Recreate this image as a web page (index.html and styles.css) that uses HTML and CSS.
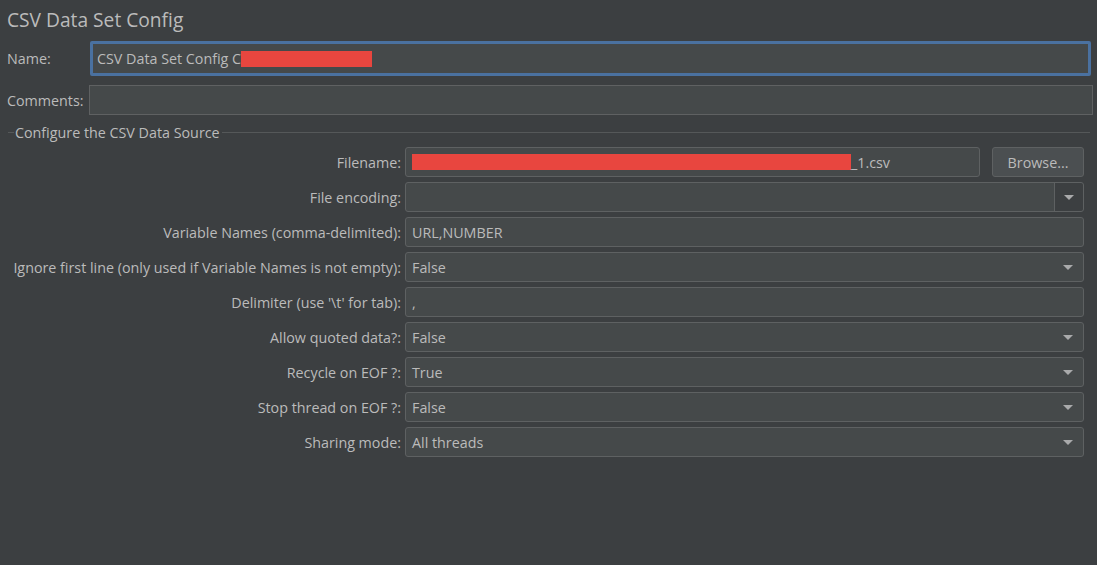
FILE: index.html
```html
<!DOCTYPE html>
<html>
<head>
<meta charset="utf-8">
<link rel="stylesheet" href="styles.css">
</head>
<body>
<div class="panel">
  <div class="title">CSV Data Set Config</div>
  <div class="top-row name-row">
    <label class="top-label">Name:</label>
    <div class="field focused"><span>CSV Data Set Config C</span><span class="redact name-redact"></span></div>
  </div>
  <div class="top-row comments-row">
    <label class="top-label">Comments:</label>
    <div class="field plain"></div>
  </div>
  <div class="group">
    <div class="group-title"><span class="tick"></span><span class="gt-text">Configure the CSV Data Source</span><span class="rule"></span></div>
    <div class="form">
      <label>Filename:</label>
      <div class="file-line">
        <div class="field box"><span class="redact file-redact"></span><span>_1.csv</span></div>
        <button class="browse">Browse...</button>
      </div>

      <label>File encoding:</label>
      <div class="field box combo editable"><span class="val"></span><span class="arrow-btn"><span class="tri"></span></span></div>

      <label>Variable Names (comma-delimited):</label>
      <div class="field box"><span>URL,NUMBER</span></div>

      <label>Ignore first line (only used if Variable Names is not empty):</label>
      <div class="field box combo"><span class="val">False</span><span class="arrow"><span class="tri"></span></span></div>

      <label>Delimiter (use '\t' for tab):</label>
      <div class="field box"><span>,</span></div>

      <label>Allow quoted data?:</label>
      <div class="field box combo"><span class="val">False</span><span class="arrow"><span class="tri"></span></span></div>

      <label>Recycle on EOF ?:</label>
      <div class="field box combo"><span class="val">True</span><span class="arrow"><span class="tri"></span></span></div>

      <label>Stop thread on EOF ?:</label>
      <div class="field box combo"><span class="val">False</span><span class="arrow"><span class="tri"></span></span></div>

      <label>Sharing mode:</label>
      <div class="field box combo"><span class="val">All threads</span><span class="arrow"><span class="tri"></span></span></div>
    </div>
  </div>
</div>
</body>
</html>
```

FILE: styles.css
```css
* { box-sizing: border-box; }
html, body {
  margin: 0;
  padding: 0;
  background: #3c3f41;
  width: 1097px;
  height: 565px;
  overflow: hidden;
}
body {
  font-family: "Open Sans", "Noto Sans", sans-serif;
  font-size: 14.3px;
  color: #bbbbbb;
}
.title {
  font-size: 19.2px;
  line-height: 24px;
  padding: 8px 0 0 7px;
  height: 40px;
}
.top-row {
  display: flex;
  align-items: center;
}
.top-label {
  padding-left: 7px;
  flex: none;
}
.name-row {
  height: 35px;
  margin-top: 1px;
}
.name-row .top-label { width: 90px; }
.name-row .field {
  width: 1001px;
  height: 35px;
}
.comments-row {
  margin-top: 9px;
  height: 30px;
}
.comments-row .top-label { width: 89px; }
.comments-row .field {
  width: 1004px;
  height: 30px;
}
.field {
  background: #45494a;
  display: flex;
  align-items: center;
  padding-left: 6px;
  white-space: nowrap;
}
.field.focused {
  border: 3px solid #4a71a0;
  border-radius: 2px;
  padding-left: 4px;
}
.field.plain {
  border: 1px solid #5f6162;
}
.redact {
  display: inline-block;
  background: #e8463f;
}
.name-redact {
  width: 131px;
  height: 16px;
  margin-left: 0;
}
.group {
  margin-top: 8px;
}
.group-title {
  display: flex;
  align-items: center;
  height: 18px;
}
.tick {
  width: 6px;
  height: 1px;
  background: #555859;
  margin-left: 8px;
  margin-right: 1px;
}
.gt-text {
  flex: none;
  padding-right: 2px;
}
.rule {
  flex: 1;
  height: 1px;
  background: #555859;
  margin-right: 7px;
}
.form {
  display: grid;
  grid-template-columns: 401px 1fr;
  column-gap: 4px;
  row-gap: 5px;
  padding: 6px 13px 0 0;
  grid-auto-rows: 30px;
}
.form label {
  text-align: right;
  align-self: center;
}
.file-line {
  display: flex;
  gap: 12px;
}
.file-line .field { flex: 1; }
.box {
  border: 1px solid #5e6162;
  border-radius: 3px;
  height: 30px;
}
.file-redact {
  width: 439px;
  height: 16px;
}
.browse {
  width: 92px;
  height: 30px;
  background: #4b4f51;
  border: 1px solid #5e6162;
  border-radius: 3px;
  color: #bbbbbb;
  font-family: inherit;
  font-size: 14.3px;
  padding: 0;
}
.combo {
  padding-right: 0;
}
.combo .val { flex: 1; }
.arrow {
  width: 30px;
  height: 100%;
  display: flex;
  align-items: center;
  justify-content: center;
}
.arrow-btn {
  width: 29px;
  height: 100%;
  display: flex;
  align-items: center;
  justify-content: center;
  background: #3c3f41;
  border-left: 1px solid #5e6162;
  border-radius: 0 3px 3px 0;
}
.tri {
  width: 0;
  height: 0;
  border-left: 5px solid transparent;
  border-right: 5px solid transparent;
  border-top: 5px solid #a9aaab;
}
```
